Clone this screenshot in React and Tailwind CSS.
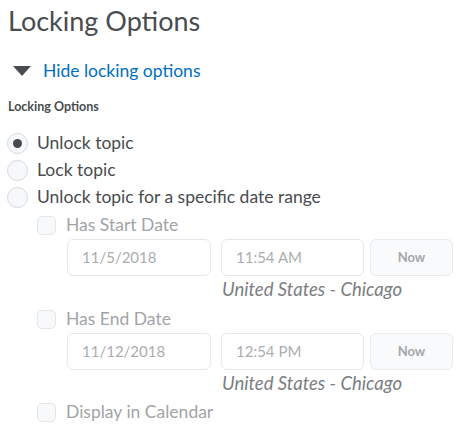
export default function App() {
  const checkbox = (
    <span className="w-[19px] h-[19px] rounded-[5px] border border-[#e3e6ea] bg-[#f7f9fb] shrink-0" />
  );
  const radio = (checked) => (
    <span className="w-[21px] h-[21px] rounded-full border border-[#d3d9e3] bg-[#f6f8fa] shrink-0 flex items-center justify-center">
      {checked && <span className="w-[9px] h-[9px] rounded-full bg-[#494c4e]" />}
    </span>
  );
  const dateRow = (date, time) => (
    <div className="flex mt-[2px] ml-[30px] h-[37px]">
      <div className="w-[144px] h-full rounded-[6px] border border-[#e6e8eb] bg-white flex items-center pl-[14px] text-[15px] text-[#abadb0]">
        {date}
      </div>
      <div className="w-[143px] ml-[10px] h-full rounded-[6px] border border-[#e6e8eb] bg-white flex items-center pl-[14px] text-[15px] text-[#abadb0]">
        {time}
      </div>
      <div className="w-[83px] ml-[6px] h-full rounded-[6px] border border-[#e9ebee] bg-[#f9fafb] flex items-center justify-center text-[13px] font-bold text-[#a4a7aa]">
        Now
      </div>
    </div>
  );
  const chicago = (
    <div className="ml-[185px] mt-[3px] leading-[20px] text-[18.5px] italic text-[#7b7e81] whitespace-nowrap">
      United States - Chicago
    </div>
  );
  return (
    <div className="px-[8px] bg-white min-h-[440px] text-[#494c4e]" style={{ fontFamily: "Lato, 'Noto Sans', sans-serif" }}>
      <h1 className="text-[27px] leading-[34px] pt-[4px] font-normal">Locking Options</h1>
      <div className="mt-[23px] flex items-center h-[20px]">
        <svg width="18" height="10" viewBox="0 0 18 10" className="ml-[5px]">
          <polygon points="0,0 18,0 9,10" fill="#494c4e" />
        </svg>
        <span className="ml-[12px] text-[17.5px] leading-[20px] text-[#006fbf]">Hide locking options</span>
      </div>
      <div className="mt-[19px] text-[12.5px] leading-[14px] font-bold">Locking Options</div>
      <div className="mt-[16px]">
        <div className="flex items-center h-[27px] -ml-[1px]">
          {radio(true)}
          <span className="ml-[9px] text-[17.5px]">Unlock topic</span>
        </div>
        <div className="flex items-center h-[27px] -ml-[1px]">
          {radio(false)}
          <span className="ml-[9px] text-[17.5px]">Lock topic</span>
        </div>
        <div className="flex items-center h-[27px] -ml-[1px]">
          {radio(false)}
          <span className="ml-[9px] text-[17.5px]">Unlock topic for a specific date range</span>
        </div>
      </div>
      <div className="ml-[29px]">
        <div className="mt-[2px] flex items-center h-[24px]">
          {checkbox}
          <span className="ml-[10px] text-[17.5px] text-[#a2a4a7]">Has Start Date</span>
        </div>
        {dateRow("11/5/2018", "11:54 AM")}
        {chicago}
        <div className="mt-[8px] flex items-center h-[24px]">
          {checkbox}
          <span className="ml-[10px] text-[17.5px] text-[#a2a4a7]">Has End Date</span>
        </div>
        {dateRow("11/12/2018", "12:54 PM")}
        {chicago}
        <div className="mt-[7px] flex items-center h-[24px]">
          {checkbox}
          <span className="ml-[10px] text-[17.5px] text-[#a2a4a7]">Display in Calendar</span>
        </div>
      </div>
    </div>
  );
}
